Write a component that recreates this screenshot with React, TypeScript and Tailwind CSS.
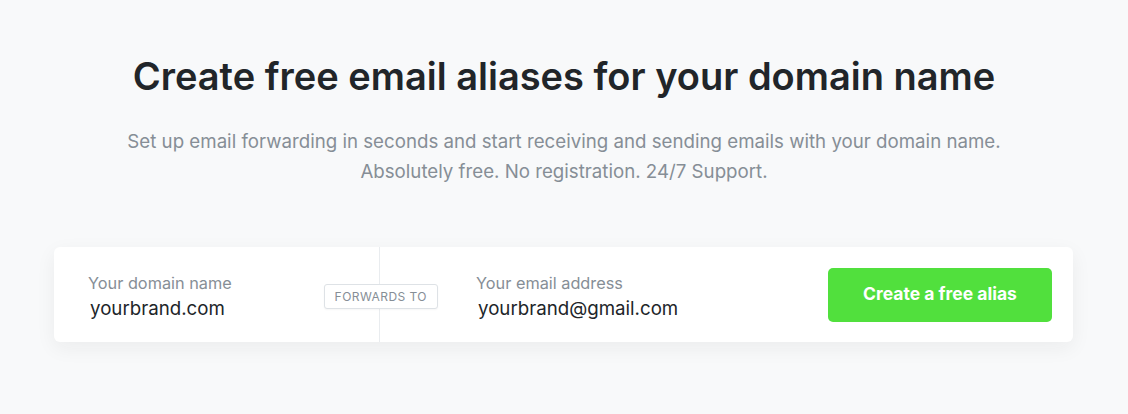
import React from 'react';

export default function App() {
  return (
    <div className="min-h-[414px] w-full bg-[#f8f9fa] font-['Inter',sans-serif] antialiased">
      <div className="flex flex-col items-center pt-[52px]">
        <h1 className="text-[38px] leading-[48px] font-semibold text-[#212529]">
          Create free email aliases for your domain name
        </h1>
        <p className="mt-[27px] text-center text-[18.7px] leading-[30px] text-[#868e96]">
          Set up email forwarding in seconds and start receiving and sending emails with your domain name.
          <br />
          Absolutely free. No registration. 24/7 Support.
        </p>
      </div>

      <form className="ml-[54px] mr-[55px] mt-[60px] flex h-[95px] items-center rounded-md bg-white shadow-[0_6px_20px_rgba(33,37,41,0.06)]">
        <div className="relative flex h-full w-[326px] flex-col justify-center border-r border-[#e9ecef] pl-[34px] pt-[4px]">
          <label htmlFor="domain" className="text-[16.3px] leading-[20px] text-[#868e96]">
            Your domain name
          </label>
          <input
            id="domain"
            type="text"
            defaultValue="yourbrand.com"
            className="mt-[4px] w-[220px] bg-transparent pl-[2px] text-[18.7px] leading-[24px] text-[#212529] outline-none"
          />
          <span className="absolute right-[-59px] top-[37px] rounded-[3px] border border-[#dee2e6] bg-white px-[10px] py-[5px] text-[12px] leading-[13px] tracking-[0.45px] text-[#868e96] shadow-[0_1px_2px_rgba(0,0,0,0.04)]">
            FORWARDS TO
          </span>
        </div>
        <div className="flex h-full flex-1 items-center pl-[96px] pr-[21px]">
          <div className="flex flex-1 flex-col justify-center pt-[4px]">
            <label htmlFor="email" className="text-[16.3px] leading-[20px] text-[#868e96]">
              Your email address
            </label>
            <input
              id="email"
              type="text"
              defaultValue="yourbrand@gmail.com"
              className="mt-[4px] w-[260px] bg-transparent pl-[2px] text-[18.7px] leading-[24px] text-[#212529] outline-none"
            />
          </div>
          <button
            type="button"
            className="h-[54px] w-[224px] rounded-[5px] bg-[#51e03d] text-[17.5px] font-bold text-white"
          >
            Create a free alias
          </button>
        </div>
      </form>
    </div>
  );
}
